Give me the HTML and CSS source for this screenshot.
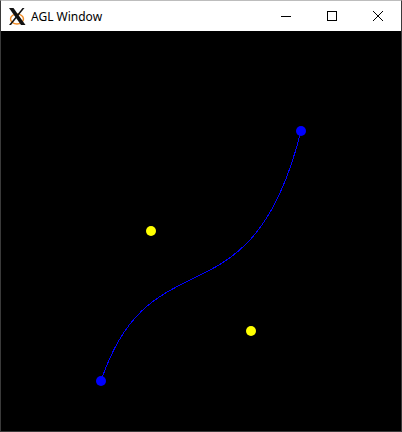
FILE: index.html
```html
<!DOCTYPE html>
<html>
<head>
<meta charset="utf-8">
<link rel="stylesheet" href="styles.css">
</head>
<body>
<div class="window">
  <div class="titlebar">
    <svg class="logo" width="20" height="20" viewBox="0 0 20 20">
      <ellipse cx="10" cy="13" rx="6.5" ry="5" fill="none" stroke="#f08a24" stroke-width="1.4"/>
      <polygon points="2,2 6.5,2 18.5,19 14,19" fill="#111"/>
      <polygon points="15.5,2 17.5,2 4,19 2,19" fill="#111"/>
    </svg>
    <span class="title">AGL Window</span>
    <div class="controls">
      <div class="btn"><svg width="10" height="10" viewBox="0 0 10 10"><line x1="0" y1="5.5" x2="10" y2="5.5" stroke="#000" stroke-width="1"/></svg></div>
      <div class="btn"><svg width="10" height="10" viewBox="0 0 10 10"><rect x="0.5" y="0.5" width="9" height="9" fill="none" stroke="#000" stroke-width="1"/></svg></div>
      <div class="btn"><svg width="10" height="10" viewBox="0 0 10 10"><path d="M0 0 L10 10 M10 0 L0 10" stroke="#000" stroke-width="1"/></svg></div>
    </div>
  </div>
  <svg class="canvas" width="400" height="400" viewBox="0 0 400 400">
    <path class="curve" d="M100 350 C150 200 250 300 300 100" fill="none" stroke="#0000ff" stroke-width="1"/>
    <circle cx="150" cy="200" r="5" fill="#ffff00"/>
    <circle cx="250" cy="300" r="5" fill="#ffff00"/>
    <circle cx="100" cy="350" r="5" fill="#0000ff"/>
    <circle cx="300" cy="100" r="5" fill="#0000ff"/>
  </svg>
</div>
</body>
</html>
```
FILE: styles.css
```css
html, body {
  margin: 0;
  padding: 0;
  background: #000;
}
.window {
  width: 402px;
  height: 432px;
  box-sizing: border-box;
  border: 1px solid #3a3a3a;
  border-top-color: #bdbdbd;
  background: #000;
  display: flex;
  flex-direction: column;
  overflow: hidden;
}
.titlebar {
  height: 30px;
  background: #fff;
  display: flex;
  align-items: center;
  flex-shrink: 0;
}
.logo {
  margin-left: 6px;
  margin-right: 4px;
}
.title {
  font-family: "Noto Sans", "Open Sans", sans-serif;
  font-size: 12px;
  color: #000;
}
.controls {
  margin-left: auto;
  display: flex;
  height: 30px;
}
.btn {
  width: 46px;
  height: 30px;
  display: flex;
  align-items: center;
  justify-content: center;
}
.canvas {
  display: block;
  background: #000;
}
.curve {
  shape-rendering: crispEdges;
}
```
